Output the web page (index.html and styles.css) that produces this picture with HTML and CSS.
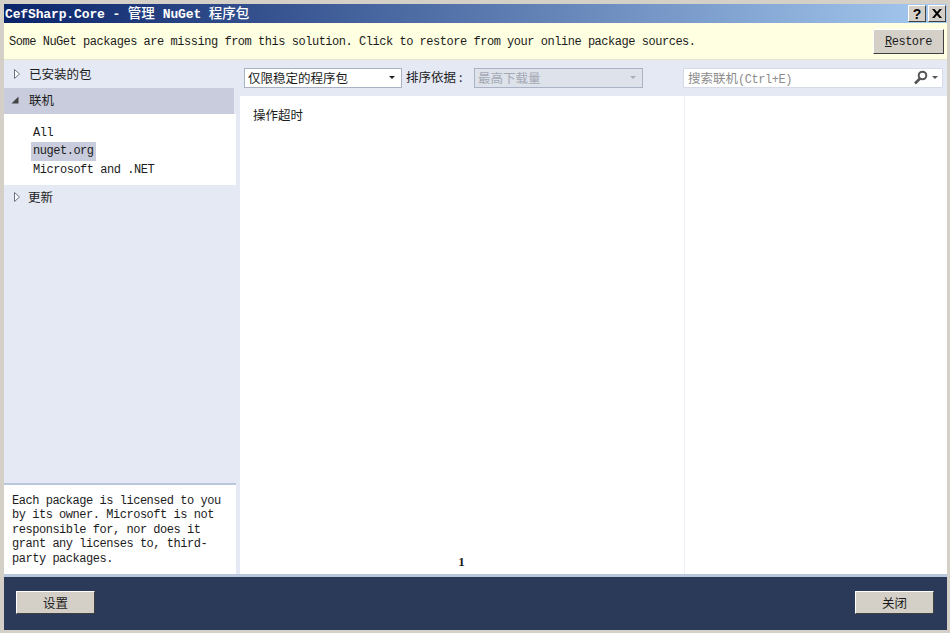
FILE: index.html
```html
<!DOCTYPE html>
<html lang="zh-CN">
<head>
  <meta charset="UTF-8" />
  <title>CefSharp.Core - 管理 NuGet 程序包</title>
  <link rel="stylesheet" href="styles.css">
</head>
<body>
  <div class="window">
    <div class="titlebar">
      <h1 class="title"><span class="lat">CefSharp.Core - </span><span class="cjk">管理</span><span class="lat">NuGet </span><span class="cjk">程序包</span></h1>
      <div class="title-buttons">
        <button class="caption-btn">?</button>
        <button class="caption-btn">
          <svg width="10" height="9" viewBox="0 0 10 9"><path d="M0 0h2.500L5 3l2.500-3H10L6.300 4.500 10 9H7.500L5 6 2.500 9H0l3.700-4.500z" fill="#000"/></svg>
        </button>
      </div>
    </div>

    <div class="notice">
      <span class="lat notice-text">Some NuGet packages are missing from this solution. Click to restore from your online package sources.</span>
      <button class="btn btn-restore lat"><u>R</u>estore</button>
    </div>

    <div class="content">
      <div class="sidebar">
        <div class="tree">
          <div class="node node-first">
            <svg class="arrow" width="6" height="10" viewBox="0 0 6 10"><path d="M.5.5v9l5-4.500z" fill="#fff" stroke="#6d7380"/></svg>
            <span>已安装的包</span>
          </div>
          <div class="node node-open">
            <svg class="arrow" width="8" height="8" viewBox="0 0 8 8"><path d="M7.500.5v7h-7z" fill="#444"/></svg>
            <span>联机</span>
          </div>
          <ul class="sources">
            <li class="lat">All</li>
            <li class="lat selected">nuget.org</li>
            <li class="lat">Microsoft and .NET</li>
          </ul>
          <div class="node">
            <svg class="arrow" width="6" height="10" viewBox="0 0 6 10"><path d="M.5.5v9l5-4.500z" fill="#fff" stroke="#6d7380"/></svg>
            <span>更新</span>
          </div>
        </div>
        <p class="license lat">Each package is licensed to you by its owner. Microsoft is not responsible for, nor does it grant any licenses to, third-party packages.</p>
      </div>

      <div class="main">
        <div class="toolbar">
          <div class="select select-filter">
            <span>仅限稳定的程序包</span>
            <svg width="6" height="3" viewBox="0 0 6 3"><path d="M0 0h6L3 3z" fill="#222"/></svg>
          </div>
          <label class="sort-label">排序依据<span class="colon">:</span></label>
          <div class="select select-sort">
            <span>最高下载量</span>
            <svg width="6" height="3" viewBox="0 0 6 3"><path d="M0 0h6L3 3z" fill="#a9aeb8"/></svg>
          </div>
          <div class="search">
            <span class="search-hint">搜索联机<span class="lat">(Ctrl+E)</span></span>
            <svg width="15" height="15" viewBox="0 0 15 15"><circle cx="9.500" cy="5.500" r="3.800" fill="none" stroke="#555" stroke-width="2"/><path d="M7 8.500l-5 5" stroke="#555" stroke-width="2.600"/></svg>
            <svg width="6" height="3" viewBox="0 0 6 3"><path d="M0 0h6L3 3z" fill="#555"/></svg>
          </div>
        </div>
        <div class="panes">
          <div class="results">
            <div class="message">操作超时</div>
            <div class="pager">1</div>
          </div>
          <div class="details"></div>
        </div>
      </div>
    </div>

    <div class="footer">
      <button class="btn btn-footer">设置</button>
      <button class="btn btn-footer">关闭</button>
    </div>
  </div>
</body>
</html>
```
FILE: styles.css
```css
* {
  margin: 0;
  padding: 0;
  box-sizing: border-box;
}

html, body {
  width: 950px;
  height: 633px;
  overflow: hidden;
}

body {
  font-family: "Noto Sans CJK SC", sans-serif;
  font-size: 12.5px;
  color: #1c1c1c;
  background: #d4d0c8;
}

/* Latin text is monospaced at 6.67px per char */
.lat {
  font-family: "Liberation Mono", "Noto Sans CJK SC", monospace;
  font-size: 12px;
  letter-spacing: -0.47px;
}

.window {
  width: 950px;
  height: 633px;
  padding: 4px 3px 3px 4px;
  display: flex;
  flex-direction: column;
}

/* Title bar */
.titlebar {
  height: 19px;
  flex: none;
  display: flex;
  justify-content: space-between;
  align-items: center;
  padding: 0 1px;
  background: linear-gradient(90deg, #0a246a, #a6caf0);
}

.title {
  color: #fff;
  font-size: 13.500px;
  font-weight: 700;
  line-height: 19px;
  white-space: pre;
}

.title .lat {
  font-size: 13px;
  letter-spacing: -0.13px;
}

.title .cjk {
  padding-right: 8px;
  font-weight: 500;
}

.title-buttons {
  display: flex;
  gap: 2px;
}

.caption-btn {
  width: 18px;
  height: 17px;
  display: flex;
  align-items: center;
  justify-content: center;
  background: #d4d0c8;
  border: 1px solid;
  border-color: #fff #404040 #404040 #fff;
  font-family: "Liberation Sans", sans-serif;
  font-size: 14px;
  font-weight: 700;
  color: #000;
}

/* Restore notice */
.notice {
  height: 37px;
  flex: none;
  display: flex;
  justify-content: space-between;
  align-items: center;
  padding: 0 3px 0 5px;
  background: #ffffe1;
  border-bottom: 1px solid #e8e6cf;
}

.notice-text {
  padding-top: 2px;
}

.btn {
  background: #d4d0c8;
  border: 1px solid;
  border-color: #fff #404040 #404040 #fff;
  color: #1c1c1c;
}

.btn-restore {
  width: 71px;
  height: 25px;
  padding-top: 2px;
}

.content {
  flex: 1;
  min-height: 0;
  display: flex;
  background: #e4e9f4;
}

/* Left navigation */
.sidebar {
  width: 236px;
  flex: none;
  display: flex;
  flex-direction: column;
  justify-content: space-between;
}

.node {
  height: 25px;
  display: flex;
  align-items: center;
  gap: 8px;
  padding-left: 10px;
  padding-bottom: 2px;
}

.node span {
  line-height: 16px;
}

.node-first {
  height: 28px;
  gap: 9px;
  padding-bottom: 0;
}

.node-open {
  width: 230px;
  height: 26px;
  gap: 10px;
  padding-left: 7px;
  padding-bottom: 3px;
  background: #c8ccdc;
}

.sources {
  width: 232px;
  list-style: none;
  background: #fff;
  padding: 9.500px 0 6px 27px;
}

.sources li {
  width: fit-content;
  height: 18.500px;
  line-height: 18.500px;
  padding: 0 2px;
}

.sources .selected {
  background: #c8ccdc;
}

.license {
  width: 232px;
  height: 91px;
  padding: 9px 8px 0;
  background: #fff;
  border-top: 2px solid #b9c7dd;
  line-height: 14.400px;
  margin-bottom: 3px;
}

/* Toolbar and panes */
.main {
  flex: 1;
  min-width: 0;
  display: flex;
  flex-direction: column;
}

.toolbar {
  height: 36px;
  flex: none;
  display: flex;
  align-items: flex-start;
  padding: 8px 4px 0 4px;
}

.select {
  height: 20px;
  display: flex;
  align-items: center;
  justify-content: space-between;
  padding: 0 6px 1px 3px;
  border: 1px solid #aab3c6;
  background: #fff;
}

.select-filter {
  width: 158px;
}

.sort-label {
  width: 72px;
  padding-left: 4px;
  line-height: 18px;
}

.colon {
  padding-left: 3px;
}

.select-sort {
  width: 169px;
  background: #dde2eb;
  color: #a4a9b3;
}

.search {
  width: 260px;
  height: 20px;
  margin-left: 40px;
  display: flex;
  align-items: center;
  gap: 4px;
  padding: 0 4px 1px;
  border: 1px solid #d5dbe8;
  background: #fff;
}

.search-hint {
  flex: 1;
  color: #8c8c8c;
}

.panes {
  flex: 1;
  min-height: 0;
  display: flex;
  background: #fff;
  margin-bottom: 3px;
}

.results {
  width: 445px;
  flex: none;
  display: flex;
  flex-direction: column;
  justify-content: space-between;
  padding: 9px 0 4px 13px;
  border-right: 1px solid #eef1f8;
}

.message {
  line-height: 20px;
}

.pager {
  text-align: center;
  font-family: "Liberation Serif", serif;
  font-size: 13px;
  font-weight: 700;
  line-height: 16px;
  padding-right: 14px;
}

.details {
  flex: 1;
}

/* Bottom bar */
.footer {
  height: 53px;
  flex: none;
  display: flex;
  justify-content: space-between;
  padding: 14px 13px 16px 12px;
  background: #2a3a58;
  box-shadow: 0 -3px 0 #b9c7dd;
}

.btn-footer {
  width: 79px;
  height: 23px;
  font-family: "Noto Sans CJK SC", sans-serif;
  font-size: 12.5px;
}
```
